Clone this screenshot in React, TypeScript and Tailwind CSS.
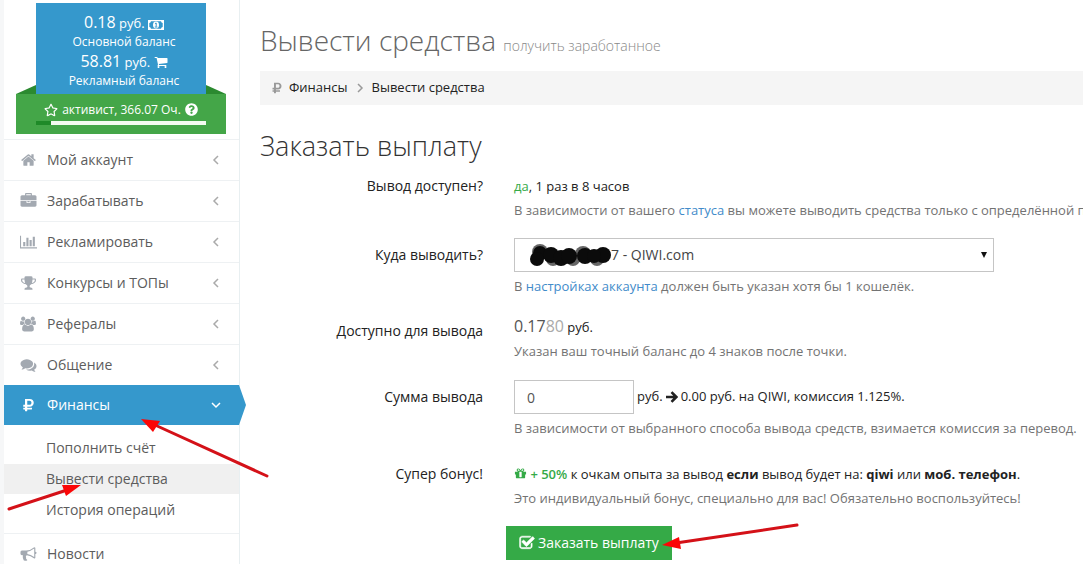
import { useState } from "react";
import type { ReactNode } from "react";
import { FaQuestionCircle, FaRegStar, FaRubleSign } from "react-icons/fa";

const icons = {
  home: "M1472 992v480q0 26-19 45t-45 19h-384v-384h-256v384h-384q-26 0-45-19t-19-45v-480q0-1 .5-3t.5-3l575-474 575 474q1 2 1 6zm223-69l-62 74q-8 9-21 11h-3q-13 0-21-7l-692-577-692 577q-12 8-24 7-13-2-21-11l-62-74q-8-10-7-23.5t11-21.5l719-599q32-26 76-26t76 26l244 204v-195q0-14 9-23t23-9h192q14 0 23 9t9 23v408l219 182q10 8 11 21.5t-7 23.5z",
  briefcase:
    "M640 256h512v-128h-512v128zm1152 640v480q0 66-47 113t-113 47h-1472q-66 0-113-47t-47-113v-480h672v160q0 26 19 45t45 19h320q26 0 45-19t19-45v-160h672zm-768 0v128h-256v-128h256zm768-480v384h-1792v-384q0-66 47-113t113-47h352v-160q0-40 28-68t68-28h576q40 0 68 28t28 68v160h352q66 0 113 47t47 113z",
  chart:
    "M640 896v512h-256v-512h256zm384-512v1024h-256v-1024h256zm1024 1152v128h-2048v-1536h128v1408h1920zm-640-896v768h-256v-768h256zm384-384v1152h-256v-1152h256z",
  trophy:
    "M522 883q-74-162-74-371h-256v96q0 78 94.5 162t235.5 113zm1078-275v-96h-256q0 209-74 371 141-29 235.5-113t94.5-162zm128-128v128q0 71-41.5 143t-112 130-173 97.5-215.5 44.5q-42 54-95 95-38 34-52.5 72.5t-14.5 89.5q0 54 30.5 91t97.5 37q75 0 133.5 45.5t58.5 114.5v64q0 14-9 23t-23 9h-832q-14 0-23-9t-9-23v-64q0-69 58.5-114.5t133.5-45.5q67 0 97.5-37t30.5-91q0-51-14.5-89.5t-52.5-72.5q-53-41-95-95-113-5-215.5-44.5t-173-97.5-112-130-41.5-143v-128q0-40 28-68t68-28h288v-96q0-66 47-113t113-47h576q66 0 113 47t47 113v96h288q40 0 68 28t28 68z",
  users:
    "M593 896q-162 5-265 128h-134q-82 0-138-40.5t-56-118.5q0-353 124-353 6 0 43.5 21t97.5 42.5 119 21.5q67 0 133-23-5 37-5 66 0 159 81 293zm1071 637q0 120-73 189.5t-194 69.5h-874q-121 0-194-69.5t-73-189.5q0-53 3.5-103.5t14-109 26.5-108.5 43-97.5 62-81 85.5-53.5 111.5-20q10 0 43 21.5t73 48 107 48 135 21.5 135-21.5 107-48 73-48 43-21.5q61 0 111.5 20t85.5 53.5 62 81 43 97.5 26.5 108.5 14 109 3.5 103.5zm-1024-1277q0 106-75 181t-181 75-181-75-75-181 75-181 181-75 181 75 75 181zm704 384q0 159-112.5 271.5t-271.5 112.5-271.5-112.5-112.5-271.5 112.5-271.5 271.5-112.5 271.5 112.5 112.5 271.5zm576 225q0 78-56 118.5t-138 40.5h-134q-103-123-265-128 81-134 81-293 0-29-5-66 66 23 133 23 59 0 119-21.5t97.5-42.5 43.5-21q124 0 124 353zm-128-609q0 106-75 181t-181 75-181-75-75-181 75-181 181-75 181 75 75 181z",
  comments:
    "M1408 768q0 139-94 257t-256.5 186.5-353.5 68.5q-86 0-176-16-124 88-278 128-36 9-86 16h-3q-11 0-20.5-8t-11.5-21q-1-3-1-6.5t.5-6.5 2-6l2.5-5 3.5-5.5 4-5 4.5-5 4-4.5q5-6 23-25t26-29.5 22.5-29 25-38.5 20.5-44q-124-72-195-177t-71-224q0-139 94-257t256.5-186.5 353.5-68.5 353.5 68.5 256.5 186.5 94 257zm384 256q0 120-71 224.5t-195 176.5q10 24 20.5 44t25 38.5 22.5 29 26 29.5 23 25q1 1 4 4.5t4.5 5 4 5 3.5 5.5l2.5 5 2 6 .5 6.5-1 6.5q-3 14-13 22t-22 7q-50-7-86-16-154-40-278-128-90 16-176 16-271 0-472-132 58 4 88 4 161 0 309-45t264-129q125-92 192-212t67-254q0-77-23-152 129 71 204 178t75 230z",
  bullhorn:
    "M1664 640q53 0 90.5 37.5t37.5 90.5-37.5 90.5-90.5 37.5v384q0 52-38 90t-90 38q-417-347-812-380-58 19-91 66t-31 100.5 40 92.5q-20 33-23 65.5t6 58 33.5 55 48 50 61.5 50.5q-29 58-111.5 83t-168.5 11.5-132-55.5q-7-23-29.5-87.5t-32-94.5-23-89-15-101 3.5-98.5 22-110.5h-122q-66 0-113-47t-47-113v-192q0-66 47-113t113-47h480q435 0 896-384 52 0 90 38t38 90v384zm-128 604v-954q-394 302-768 343v270q377 42 768 341z",
  cart: "M704 1536q0 52-38 90t-90 38-90-38-38-90 38-90 90-38 90 38 38 90zm896 0q0 52-38 90t-90 38-90-38-38-90 38-90 90-38 90 38 38 90zm128-1088v512q0 24-16.5 42.5t-40.5 21.5l-1044 122q13 60 13 70 0 16-24 64h920q26 0 45 19t19 45-19 45-45 19h-1024q-26 0-45-19t-19-45q0-11 8-31.5t16-36 21.5-40 15.5-29.5l-177-823h-204q-26 0-45-19t-19-45 19-45 45-19h256q16 0 28.5 6.5t19.5 15.5 13 24.5 8 26 5.5 29.5 4.5 26h1201q26 0 45 19t19 45z",
  check:
    "M1472 930v318q0 119-84.5 203.5t-203.5 84.5h-832q-119 0-203.5-84.5t-84.5-203.5v-832q0-119 84.5-203.5t203.5-84.5h832q63 0 117 25 15 7 18 23 3 17-9 29l-49 49q-10 10-23 10-3 0-9-2-23-6-45-6h-832q-66 0-113 47t-47 113v832q0 66 47 113t113 47h832q66 0 113-47t47-113v-254q0-13 9-22l64-64q10-10 23-10 6 0 12 3 20 8 20 29zm231-489l-814 814q-24 24-57 24t-57-24l-430-430q-24-24-24-57t24-57l110-110q24-24 57-24t57 24l263 263 647-647q24-24 57-24t57 24l110 110q24 24 24 57t-24 57z",
  gift: "M1056 1356v-716h-320v716q0 25 18 38.5t46 13.5h192q28 0 46-13.5t18-38.5zm-456-844h195l-126-161q-26-31-69-31-40 0-68 28t-28 68 28 68 68 28zm688-96q0-40-28-68t-68-28q-43 0-69 31l-125 161h194q40 0 68-28t28-68zm376 256v320q0 14-9 23t-23 9h-96v416q0 40-28 68t-68 28h-1088q-40 0-68-28t-28-68v-416h-96q-14 0-23-9t-9-23v-320q0-14 9-23t23-9h440q-93 0-158.5-65.5t-65.5-158.5 65.5-158.5 158.5-65.5q107 0 168 77l128 165 128-165q61-77 168-77 93 0 158.5 65.5t65.5 158.5-65.5 158.5-158.5 65.5h440q14 0 23 9t9 23z",
};

type IconName = keyof typeof icons;

function Icon({ name, className }: { name: IconName; className?: string }) {
  const wide = name === "chart" || name === "users";
  return (
    <svg
      viewBox={wide ? "0 0 2048 1792" : "0 0 1792 1792"}
      fill="currentColor"
      className={className}
      aria-hidden="true"
    >
      <path d={icons[name]} />
    </svg>
  );
}

function Stroke({ d, className, width = 1.5 }: { d: string; className: string; width?: number }) {
  return (
    <svg
      viewBox="0 0 12 12"
      fill="none"
      stroke="currentColor"
      strokeWidth={width}
      className={className}
      aria-hidden="true"
    >
      <path d={d} />
    </svg>
  );
}

function MoneyIcon() {
  return (
    <svg viewBox="0 0 16 10" className="inline-block h-[10px] w-4" aria-hidden="true">
      <path
        fill="#fff"
        fillRule="evenodd"
        d="M0 0h16v10H0zM3 1.3A2 2 0 0 1 1.3 3v4A2 2 0 0 1 3 8.700h10A2 2 0 0 1 14.700 7V3A2 2 0 0 1 13 1.300z"
      />
      <ellipse cx="8" cy="5" rx="3" ry="3.400" fill="#fff" />
      <path d="M7 3.600 8.200 3v3.600M6.800 7h2.600" stroke="#3598cc" fill="none" />
    </svg>
  );
}

const menu: { icon: IconName; text: string }[] = [
  { icon: "home", text: "Мой аккаунт" },
  { icon: "briefcase", text: "Зарабатывать" },
  { icon: "chart", text: "Рекламировать" },
  { icon: "trophy", text: "Конкурсы и ТОПы" },
  { icon: "users", text: "Рефералы" },
  { icon: "comments", text: "Общение" },
];

const submenu = ["Пополнить счёт", "Вывести средства", "История операций"];

function Profile() {
  return (
    <div className="pt-[3px] pr-[13px] pb-[5px] pl-3 text-center text-white">
      <div className="flex items-end">
        <svg viewBox="0 0 20 9" className="h-[9px] w-5" aria-hidden="true">
          <path d="M20 0v9H0z" fill="#2b8a30" />
        </svg>
        <div className="flex-1 bg-[#3598cc] pt-[9px] pb-1 pl-[6px] text-[13px] leading-5">
          <p>
            <span className="text-base leading-5">0.18</span> руб. <MoneyIcon />
          </p>
          <p className="text-xs leading-[18px]">Основной баланс</p>
          <p>
            <span className="text-base leading-5">58.81</span> руб.{" "}
            <Icon name="cart" className="inline-block size-[14px] align-[-2px]" />
          </p>
          <p className="text-xs leading-[18px]">Рекламный баланс</p>
        </div>
        <svg viewBox="0 0 20 9" className="h-[9px] w-5" aria-hidden="true">
          <path d="M0 0v9h20z" fill="#2b8a30" />
        </svg>
      </div>
      <div className="bg-[#44a648] px-5 pt-1 pb-[9px]">
        <p className="flex items-center justify-center gap-1 text-xs leading-[23px] whitespace-nowrap">
          <FaRegStar size={14} />
          активист, 366.07 Оч.
          <FaQuestionCircle size={13} />
        </p>
        <div className="h-1 bg-[#f4fbf1]">
          <div className="h-full w-[15px] bg-[#1f8a28]" />
        </div>
      </div>
    </div>
  );
}

function Sidebar() {
  return (
    <aside className="w-[236px] shrink-0 border-r border-[#e8eff1]">
      <Profile />
      <nav className="text-sm text-[#5c5c5c]">
        {menu.map((item) => (
          <a
            key={item.text}
            href="#"
            className="flex h-[41px] items-center border-t border-[#eef1f3] pr-[17px] pl-4"
          >
            <Icon name={item.icon} className="mr-[10px] h-4 w-[17px] text-[#a3a9b1]" />
            <span className="flex-1">{item.text}</span>
            <Stroke d="M8 2 4 6 8 10" className="size-3 text-[#aaa]" />
          </a>
        ))}
        <a
          href="#"
          className="relative flex h-10 items-center bg-[#3598cc] pr-[17px] pl-4 text-white"
        >
          <FaRubleSign size={14} className="mr-[10px] w-[17px]" />
          <span className="flex-1">Финансы</span>
          <Stroke d="M2 4 6 8 10 4" className="size-3" />
          <svg
            viewBox="0 0 7 40"
            className="absolute top-0 left-full h-10 w-[7px]"
            aria-hidden="true"
          >
            <path d="M0 0l7 20-7 20z" fill="#3598cc" />
          </svg>
        </a>
        <div className="flex flex-col gap-px py-2">
          {submenu.map((text) => (
            <a
              key={text}
              href="#"
              className={
                text === "Вывести средства"
                  ? "bg-[#f0f0f0] pl-[42px] leading-[30px]"
                  : "pl-[42px] leading-[30px]"
              }
            >
              {text}
            </a>
          ))}
        </div>
        <a href="#" className="flex h-[41px] items-center border-t border-[#eef1f3] pl-4">
          <Icon name="bullhorn" className="mr-[10px] h-4 w-[17px] text-[#a3a9b1]" />
          Новости
        </a>
      </nav>
    </aside>
  );
}

function Row({
  label,
  htmlFor,
  className,
  labelClassName = "",
  children,
}: {
  label: string;
  htmlFor?: string;
  className: string;
  labelClassName?: string;
  children: ReactNode;
}) {
  const labelClass = `text-right text-sm leading-5 ${labelClassName}`;
  return (
    <div className={`grid grid-cols-[223px_1fr] gap-x-[31px] whitespace-nowrap ${className}`}>
      {htmlFor ? (
        <label htmlFor={htmlFor} className={labelClass}>
          {label}
        </label>
      ) : (
        <span className={labelClass}>{label}</span>
      )}
      <div className="min-w-0">{children}</div>
    </div>
  );
}

function Help({ children }: { children: ReactNode }) {
  return <p className="mt-1 text-[13px] leading-5 text-[#737373]">{children}</p>;
}

function Redaction() {
  return (
    <svg
      viewBox="0 0 82 26"
      className="pointer-events-none absolute top-[5px] left-4 h-[26px] w-[82px]"
      aria-hidden="true"
    >
      <g fill="#666">
        <circle cx="10" cy="9" r="8" />
        <circle cx="23" cy="16" r="7" />
        <circle cx="43" cy="16" r="7" />
        <circle cx="53" cy="11" r="8" />
        <circle cx="67" cy="16" r="7" />
      </g>
      <g fill="#0b0b0b">
        <circle cx="10" cy="10" r="7" />
        <circle cx="7" cy="16" r="7" />
        <circle cx="21" cy="12" r="8" />
        <circle cx="31" cy="15" r="8" />
        <circle cx="39" cy="13" r="8" />
        <circle cx="55" cy="13" r="8" />
        <circle cx="73" cy="12" r="8" />
        <circle cx="64" cy="13" r="7" />
      </g>
    </svg>
  );
}

function Arrow({
  className,
  viewBox,
  line,
  head,
}: {
  className: string;
  viewBox: string;
  line: string;
  head: string;
}) {
  return (
    <svg
      viewBox={viewBox}
      className={`pointer-events-none absolute ${className}`}
      aria-hidden="true"
    >
      <path d={line} stroke="#d41118" strokeWidth="3" strokeLinecap="round" />
      <path d={head} fill="#fb0606" />
    </svg>
  );
}

export default function App() {
  const [amount, setAmount] = useState("0");

  return (
    <div className="relative flex h-screen overflow-hidden bg-white pl-1 font-['Open_Sans','Noto_Sans',sans-serif] text-[#222]">
      <div className="absolute inset-y-0 left-0 w-1 bg-[#f6f7f8]" />
      <Sidebar />
      <main className="min-w-0 flex-1 pl-5">
        <h1 className="pt-5 text-[28px] leading-10 font-light text-[#666]">
          Вывести средства <small className="text-sm text-[#888]">получить заработанное</small>
        </h1>
        <div className="mt-[11px] flex h-[34px] items-center bg-[#f5f5f5] pl-[11px] text-[13px]">
          <FaRubleSign size={12} color="#999" className="mr-[6px]" />
          <a href="#">Финансы</a>
          <Stroke d="M4 2 8 6 4 10" className="mx-[6px] size-3 text-[#999]" />
          <a href="#">Вывести средства</a>
        </div>

        <h2 className="mt-[23px] text-[27px] leading-9 font-light text-[#333]">
          Заказать выплату
        </h2>
        <form onSubmit={(e) => e.preventDefault()}>
          <Row label="Вывод доступен?" className="mt-3">
            <p className="text-[13px] leading-5">
              <span className="text-[#35aa47]">да</span>, 1 раз в 8 часов
            </p>
            <Help>
              В зависимости от вашего{" "}
              <a href="#" className="text-[#428bca]">
                статуса
              </a>{" "}
              вы можете выводить средства только с определённой п
            </Help>
          </Row>
          <Row
            label="Куда выводить?"
            htmlFor="wallet"
            className="mt-[18px]"
            labelClassName="pt-[7px]"
          >
            <div className="relative w-[480px]">
              <select
                id="wallet"
                className="block h-[34px] w-full appearance-none border border-[#c5c5c5] bg-white pl-[96px] text-sm text-[#444]"
              >
                <option>7 - QIWI.com</option>
              </select>
              <Redaction />
              <svg
                viewBox="0 0 6 6"
                className="pointer-events-none absolute top-[14px] right-[7px] size-[6px]"
                aria-hidden="true"
              >
                <path d="M0 0h6L3 6z" fill="#111" />
              </svg>
            </div>
            <Help>
              В{" "}
              <a href="#" className="text-[#428bca]">
                настройках аккаунта
              </a>{" "}
              должен быть указан хотя бы 1 кошелёк.
            </Help>
          </Row>
          <Row label="Доступно для вывода" className="mt-5" labelClassName="pt-[5px]">
            <p className="text-[13px] leading-5">
              <span className="text-base leading-5 text-[#555]">
                0.17<span className="text-[#aaa]">80</span>
              </span>{" "}
              руб.
            </p>
            <Help>Указан ваш точный баланс до 4 знаков после точки.</Help>
          </Row>
          <Row
            label="Сумма вывода"
            htmlFor="amount"
            className="mt-[19px]"
            labelClassName="pt-[7px]"
          >
            <div className="flex items-center gap-[3px] text-[13px]">
              <input
                id="amount"
                value={amount}
                onChange={(e) => setAmount(e.target.value)}
                className="h-[34px] w-[120px] border border-[#c5c5c5] px-3 text-sm text-[#555]"
              />
              руб.
              <Stroke d="M0 6h10M5.500 1.200 10.300 6 5.500 10.800" width={2.6} className="size-3" />
              0.00 руб. на QIWI, комиссия 1.125%.
            </div>
            <Help>
              В зависимости от выбранного способа вывода средств, взимается комиссия за перевод.
            </Help>
          </Row>
          <Row label="Супер бонус!" className="mt-[26px]">
            <p className="text-[13px] leading-5">
              <span className="font-semibold text-[#35aa47]">
                <Icon name="gift" className="inline-block size-[13px] align-[-1px]" /> + 50%
              </span>{" "}
              к очкам опыта за вывод <b>если</b> вывод будет на: <b>qiwi</b> или{" "}
              <b>моб. телефон</b>.
            </p>
            <Help>Это индивидуальный бонус, специально для вас! Обязательно воспользуйтесь!</Help>
          </Row>
          <button
            type="submit"
            className="mt-[18px] ml-[246px] flex h-[34px] items-center gap-[3px] bg-[#35aa47] px-[13px] text-sm whitespace-nowrap text-white"
          >
            <Icon name="check" className="size-4 stroke-white stroke-[60]" />
            Заказать выплату
          </button>
        </form>
      </main>

      <Arrow
        className="top-[415px] left-[140px] h-[65px] w-[132px]"
        viewBox="140 415 132 65"
        line="M155 425L267 476"
        head="M141 419l19 2-7 11z"
      />
      <Arrow
        className="top-[480px] left-[5px] h-[32px] w-[80px]"
        viewBox="5 480 80 32"
        line="M9 509l58-19"
        head="M81 485l-19 0 4 11z"
      />
      <Arrow
        className="top-[520px] left-[660px] h-[32px] w-[142px]"
        viewBox="660 520 142 32"
        line="M676 543l121-18"
        head="M662 545l17-8 2 12z"
      />
    </div>
  );
}
